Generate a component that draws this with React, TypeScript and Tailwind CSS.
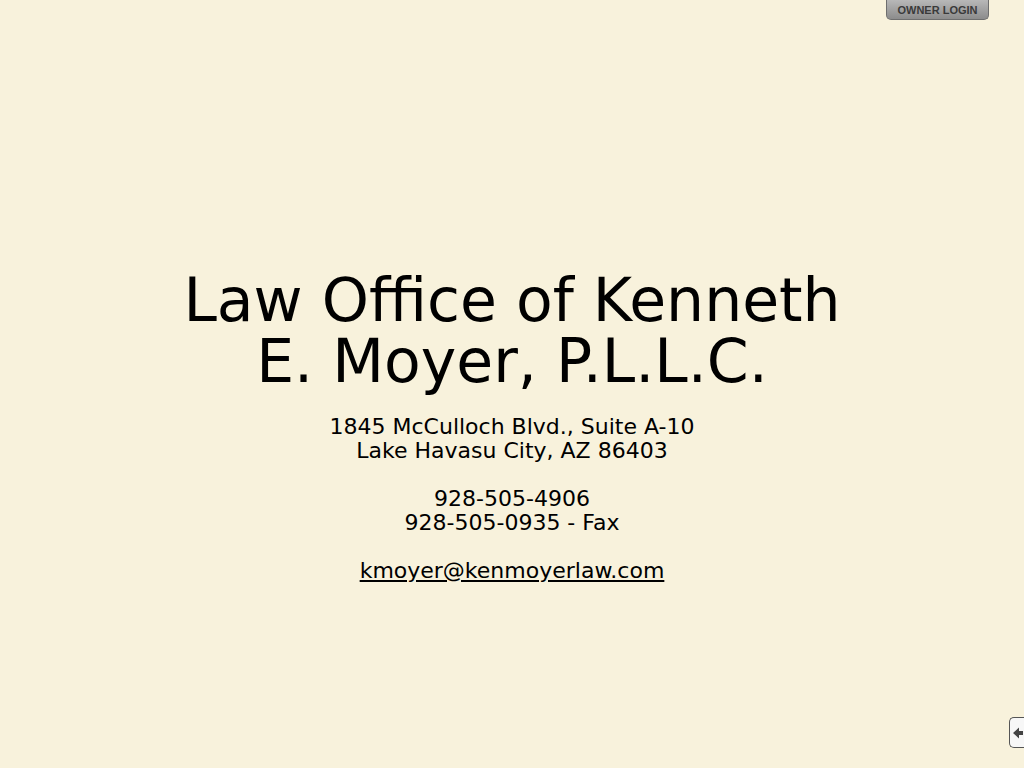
import React from "react";

export default function App() {
  return (
    <div className="relative min-h-[768px] w-full bg-[#f8f2dc] overflow-hidden" style={{ fontFamily: '"DejaVu Sans", sans-serif' }}>
      <button className="absolute right-[35px] top-0 h-[20px] w-[103px] rounded-b-[5px] border border-t-0 border-[#6e6e6e] bg-gradient-to-b from-[#b8b8b8] to-[#8c8c8c] text-[11px] font-bold leading-[18px] text-[#3a3a3a]" style={{ fontFamily: '"Liberation Sans", Arial, sans-serif' }}>
        OWNER LOGIN
      </button>
      <div className="flex flex-col items-center pt-[270px] text-center text-black">
        <h1 className="text-[60px] leading-[61px] font-normal">
          Law Office of Kenneth
          <br />
          E. Moyer, P.L.L.C.
        </h1>
        <p className="mt-[23px] text-[22px] leading-[24px]">
          1845 McCulloch Blvd., Suite A-10
          <br />
          Lake Havasu City, AZ 86403
          <br />
          <br />
          928-505-4906
          <br />
          928-505-0935 - Fax
          <br />
          <br />
          <a href="#" className="underline text-black">kmoyer@kenmoyerlaw.com</a>
        </p>
      </div>
      <div className="absolute right-0 top-[717px] flex h-[31px] w-[15px] items-center justify-center rounded-l-[5px] border border-r-0 border-[#555] bg-[#f7f7f7]">
        <svg width="10" height="12" viewBox="0 0 10 12" className="ml-[2px]">
          <path d="M0 6 L6 0.5 L6 4 L10 4 L10 8 L6 8 L6 11.5 Z" fill="#444" />
        </svg>
      </div>
    </div>
  );
}
